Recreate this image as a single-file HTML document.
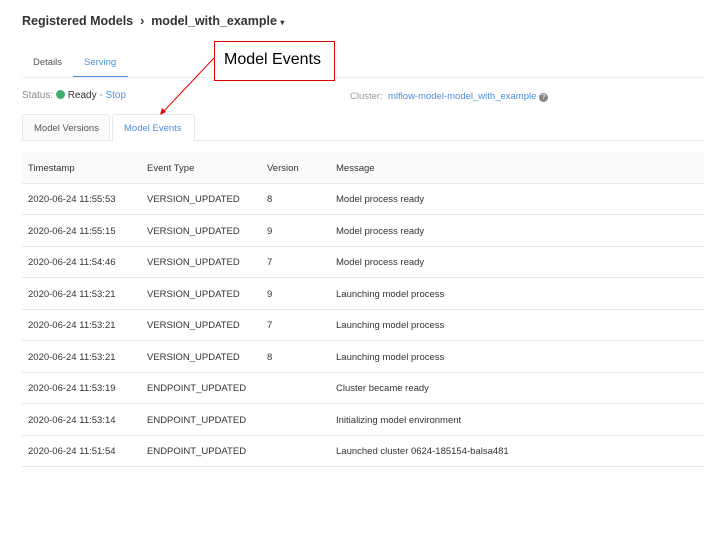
<!DOCTYPE html><html><head><style>
body{margin:0;width:720px;height:540px;background:#fff;font-family:"Liberation Sans",sans-serif;position:relative;overflow:hidden}
.a{position:absolute;white-space:nowrap}
.t{font-size:9.5px;color:#333}
.row{position:absolute;left:22px;width:682px;height:31px;border-bottom:1px solid #e8e8e8}
.row span{position:absolute;top:11px;font-size:9.5px;color:#333}
</style></head><body>
<div class="a" style="left:22px;top:14px;font-size:12.5px;font-weight:bold;color:#333">Registered Models &nbsp;›&nbsp; model_with_example <span style="font-size:8px">▾</span></div>
<div class="a t" style="left:33px;top:57px;color:#555">Details</div>
<div class="a t" style="left:84px;top:57px;color:#4a90d9">Serving</div>
<div class="a" style="left:73px;top:76px;width:55px;height:2px;background:#4a90d9"></div>
<div class="a" style="left:22px;top:77px;width:682px;height:1px;background:#eee"></div>
<div class="a" style="left:22px;top:90px;font-size:10px;color:#888">Status: <span style="display:inline-block;width:9px;height:9px;border-radius:50%;background:#3fb069;vertical-align:-1px"></span> <span style="color:#333">Ready</span> - <span style="color:#4a90d9">Stop</span></div>
<div class="a t" style="left:350px;top:91px;color:#999">Cluster: &nbsp;<span style="color:#4a90d9">mlflow-model-model_with_example</span> <span style="display:inline-block;width:9px;height:9px;border-radius:50%;background:#888;color:#fff;font-size:7px;text-align:center;line-height:9px;vertical-align:0">?</span></div>
<div class="a" style="left:22px;top:114px;width:86px;height:26px;background:#fafafa;border:1px solid #e8e8e8;border-bottom:none;border-radius:3px 3px 0 0"></div>
<div class="a t" style="left:34px;top:123px;color:#555">Model Versions</div>
<div class="a" style="left:112px;top:114px;width:81px;height:27px;background:#fff;border:1px solid #e8e8e8;border-bottom:none;border-radius:3px 3px 0 0"></div>
<div class="a t" style="left:124px;top:123px;color:#4a90d9">Model Events</div>
<div class="a" style="left:22px;top:140px;width:90px;height:1px;background:#e8e8e8"></div>
<div class="a" style="left:194px;top:140px;width:510px;height:1px;background:#e8e8e8"></div>
<div class="row" style="top:152px;background:#fafafa"><span style="left:6px">Timestamp</span><span style="left:125px">Event Type</span><span style="left:245px">Version</span><span style="left:314px">Message</span></div>
<div class="row" style="top:183px"><span style="left:6px">2020-06-24 11:55:53</span><span style="left:125px">VERSION_UPDATED</span><span style="left:245px">8</span><span style="left:314px">Model process ready</span></div>
<div class="row" style="top:215px"><span style="left:6px">2020-06-24 11:55:15</span><span style="left:125px">VERSION_UPDATED</span><span style="left:245px">9</span><span style="left:314px">Model process ready</span></div>
<div class="row" style="top:246px"><span style="left:6px">2020-06-24 11:54:46</span><span style="left:125px">VERSION_UPDATED</span><span style="left:245px">7</span><span style="left:314px">Model process ready</span></div>
<div class="row" style="top:278px"><span style="left:6px">2020-06-24 11:53:21</span><span style="left:125px">VERSION_UPDATED</span><span style="left:245px">9</span><span style="left:314px">Launching model process</span></div>
<div class="row" style="top:309px"><span style="left:6px">2020-06-24 11:53:21</span><span style="left:125px">VERSION_UPDATED</span><span style="left:245px">7</span><span style="left:314px">Launching model process</span></div>
<div class="row" style="top:341px"><span style="left:6px">2020-06-24 11:53:21</span><span style="left:125px">VERSION_UPDATED</span><span style="left:245px">8</span><span style="left:314px">Launching model process</span></div>
<div class="row" style="top:372px"><span style="left:6px">2020-06-24 11:53:19</span><span style="left:125px">ENDPOINT_UPDATED</span><span style="left:314px">Cluster became ready</span></div>
<div class="row" style="top:404px"><span style="left:6px">2020-06-24 11:53:14</span><span style="left:125px">ENDPOINT_UPDATED</span><span style="left:314px">Initializing model environment</span></div>
<div class="row" style="top:435px"><span style="left:6px">2020-06-24 11:51:54</span><span style="left:125px">ENDPOINT_UPDATED</span><span style="left:314px">Launched cluster 0624-185154-balsa481</span></div>
<div class="a" style="left:214px;top:41px;width:119px;height:38px;border:1px solid #d00;background:#fff"></div>
<div class="a" style="left:224px;top:51px;font-size:16px;color:#000">Model Events</div>
<svg class="a" style="left:0;top:0" width="720" height="540"><line x1="214" y1="58" x2="163" y2="112" stroke="#e00" stroke-width="1"/><path d="M160 115 L162 108 L166 112 Z" fill="#e00"/></svg>
</body></html>
